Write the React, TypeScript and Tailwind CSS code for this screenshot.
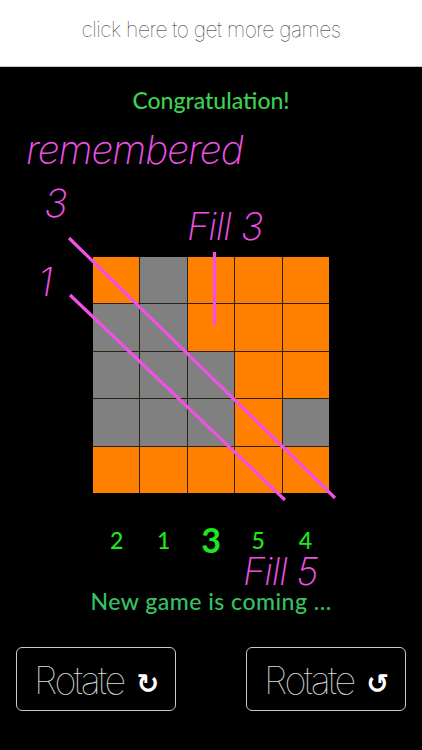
const board = ["OGOOO", "GGOOO", "GGGOO", "GGGOG", "OOOOO"];

const numbers = [
  { label: "2", big: false },
  { label: "1", big: false },
  { label: "3", big: true },
  { label: "5", big: false },
  { label: "4", big: false },
];

function RotateButton({ glyph }: { glyph: string }) {
  return (
    <button className="flex h-[64px] w-[160px] items-center rounded-[6px] border border-[#c8c8c8] pl-[17px] pt-[3px] font-['Inter',sans-serif] text-[38px] font-thin tracking-[-2.6px] text-[#e0e0e0]">
      Rotate
      <span className="ml-[13px] mt-[6px] font-['DejaVu_Sans',sans-serif] text-[27px] font-bold leading-none tracking-normal text-white">{glyph}</span>
    </button>
  );
}

function Hint({ className, children }: { className: string; children: string }) {
  return (
    <span className={`absolute font-['Inter',sans-serif] font-extralight italic leading-[46px] tracking-[-1px] text-[#f050e6] ${className}`}>
      {children}
    </span>
  );
}

export default function App() {
  return (
    <div className="relative flex h-[750px] w-[422px] flex-col overflow-hidden bg-black">
      <div className="flex h-[67px] items-center justify-center border-b border-[#c8c8c8] bg-white pb-[7px] font-['Inter',sans-serif] text-[21px] font-thin tracking-[-0.5px] text-[#222]">
        click here to get more games
      </div>

      <div className="mt-[19px] text-center font-['Lato',sans-serif] text-[23px] font-medium leading-[28px] text-[#3ecf55]">
        Congratulation!
      </div>

      <div className="ml-[93px] mt-[143px] grid h-[236px] w-[236px] grid-cols-5 grid-rows-5 gap-px bg-[#2a2013]">
        {board.flatMap((row, r) =>
          row.split("").map((c, i) => (
            <div key={`${r}-${i}`} className={c === "O" ? "bg-[#ff8000]" : "bg-[#808080]"} />
          ))
        )}
      </div>

      <div className="ml-[93px] mt-[29px] grid w-[236px] grid-cols-5 items-center text-center font-['Lato',sans-serif] font-medium leading-[36px] text-[#1fe61f]">
        {numbers.map((n) => (
          <span key={n.label} className={n.big ? "text-[34px] font-bold" : "text-[23px]"}>
            {n.label}
          </span>
        ))}
      </div>

      <div className="mt-[28px] text-center font-['Lato',sans-serif] text-[23px] font-medium leading-[30px] tracking-[0.5px] text-[#35c264]">
        New game is coming ...
      </div>

      <div className="mt-[31px] flex justify-between pl-[16px] pr-[16px]">
        <RotateButton glyph="↻" />
        <RotateButton glyph="↺" />
      </div>

      {/* hint labels drawn over the board */}
      <Hint className="left-[26px] top-[127px] text-[39px]">remembered</Hint>
      <Hint className="left-[44px] top-[180px] text-[39px]">3</Hint>
      <Hint className="left-[38px] top-[259px] text-[39px]">1</Hint>
      <Hint className="left-[187px] top-[203px] text-[38px]">Fill 3</Hint>
      <Hint className="left-[243px] top-[548px] text-[38px]">Fill 5</Hint>

      <svg className="absolute left-0 top-0" width="422" height="750" fill="none" stroke="#f050e6" strokeWidth="3.2">
        <line x1="69" y1="238" x2="335" y2="498" />
        <line x1="70" y1="295" x2="285" y2="500" />
        <line x1="214.5" y1="252" x2="214.5" y2="325" />
      </svg>
    </div>
  );
}
